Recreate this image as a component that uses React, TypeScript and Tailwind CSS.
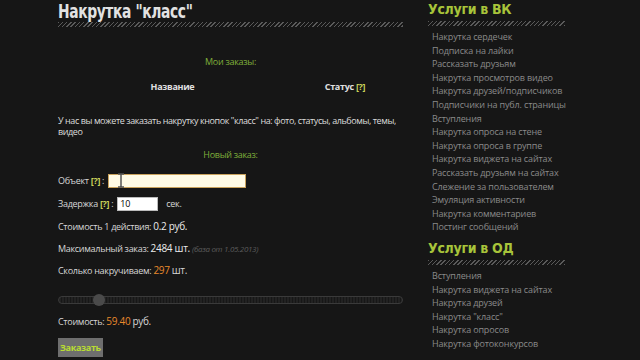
const hatch =
  "bg-[repeating-linear-gradient(135deg,#5a5a5a_0px,#5a5a5a_1px,transparent_1px,transparent_3px)]"

const vkLinks = [
  "Накрутка сердечек",
  "Подписка на лайки",
  "Рассказать друзьям",
  "Накрутка просмотров видео",
  "Накрутка друзей/подписчиков",
  "Подписчики на публ. страницы",
  "Вступления",
  "Накрутка опроса на стене",
  "Накрутка опроса в группе",
  "Накрутка виджета на сайтах",
  "Рассказать друзьям на сайтах",
  "Слежение за пользователем",
  "Эмуляция активности",
  "Накрутка комментариев",
  "Постинг сообщений",
]

const okLinks = [
  "Вступления",
  "Накрутка виджета на сайтах",
  "Накрутка друзей",
  "Накрутка \"класс\"",
  "Накрутка опросов",
  "Накрутка фотоконкурсов",
]

function Help() {
  return <span className="font-bold text-[#c9d35a]">[?]</span>
}

function SideBlock({ title, links, top }: { title: string; links: string[]; top: string }) {
  return (
    <div className={top}>
      <div className="h-[18px] font-['DejaVu_Sans_Condensed','Liberation_Sans_Narrow',sans-serif] text-[14px] font-bold leading-[18px] tracking-[-0.3px] text-[#a8c43a] [font-stretch:condensed]">
        {title}
      </div>
      <div className={`mt-[3px] h-[5px] ${hatch}`} />
      <ul className="mt-[4px] pl-1">
        {links.map((l) => (
          <li key={l} className="h-[13.6px] whitespace-nowrap text-[9px] leading-[13.6px] tracking-[-0.15px] text-[#8a8a8a]">
            {l}
          </li>
        ))}
      </ul>
    </div>
  )
}

export default function App() {
  return (
    <div className="flex h-[360px] w-[640px] overflow-hidden bg-[#161616] pl-[58px] font-['Open_Sans','Noto_Sans',sans-serif] text-[9px] tracking-[-0.3px] text-[#d6d6d6]">
      <main className="w-[345px]">
        <h1 className="h-[22px] origin-left scale-x-[0.77] whitespace-nowrap font-['DejaVu_Sans_Condensed','Liberation_Sans_Narrow',sans-serif] text-[20px] font-bold leading-[22px] tracking-[-0.5px] text-[#e2e2e2] [font-stretch:condensed]">
          Накрутка "класс"
        </h1>
        <div className={`h-[5px] ${hatch}`} />

        <div className="mt-[29px] h-[12px] text-center leading-[12px] text-[#7fae3a]">Мои заказы:</div>

        <div className="mt-[13px] grid h-[12px] grid-cols-[229px_116px] text-center font-bold leading-[12px] text-[#e0e0e0]">
          <div>Название</div>
          <div>
            Статус <Help />
          </div>
        </div>

        <p className="mt-[22px] leading-[11px] tracking-[-0.42px] text-[#dcdcdc]">
          У нас вы можете заказать накрутку кнопок "класс" на: фото, статусы, альбомы, темы, видео
        </p>

        <div className="mt-[12px] h-[12px] text-center leading-[12px] text-[#7fae3a]">Новый заказ:</div>

        <div className="relative mt-[13px] flex h-[14px] items-center gap-1">
          <span>
            Объект <Help /> :
          </span>
          <div className="h-[14px] w-[138px] border border-[#c9a25c] bg-[#fffbe6]" />
          <svg className="absolute left-[59px] top-[-1px]" width="8" height="15" viewBox="0 0 8 15">
            <path d="M1 1h2.5l0.5 1 0.5-1H7M4 2v11M1 14h2.5l0.5-1 0.5 1H7" stroke="#555" strokeWidth="1.5" fill="none" />
          </svg>
        </div>

        <div className="mt-[9px] flex h-[14px] items-center gap-1">
          <span>
            Задержка <Help /> :
          </span>
          <div className="flex h-[14px] w-[41px] items-center border border-[#bbb] bg-white pl-[2px] text-[9px] text-black">10</div>
          <span className="ml-1">сек.</span>
        </div>

        <div className="mt-[9px] h-[12px] leading-[12px]">
          Стоимость 1 действия: <span className="text-[10px] text-[#ececec]">0.2 руб.</span>
        </div>

        <div className="mt-[10px] h-[12px] leading-[12px]">
          Максимальный заказ: <span className="text-[10px] text-[#ececec]">2484 шт.</span>{" "}
          <span className="text-[8px] italic text-[#5c5c5c]">(база от 1.05.2013)</span>
        </div>

        <div className="mt-[10px] h-[12px] leading-[12px]">
          Сколько накручиваем: <span className="text-[10px] text-[#e8892c]">297</span>{" "}
          <span className="text-[10px]">шт.</span>
        </div>

        <div className="relative mt-[18px] flex h-[12px] items-center">
          <div className="h-[8px] w-full rounded-full border border-[#3a3a3a] bg-[repeating-linear-gradient(90deg,#222_0px,#222_2px,#171717_2px,#171717_3px)]" />
          <div className="absolute left-[35px] top-0 h-[12px] w-[12px] rounded-full bg-[#4a4a4a]" />
        </div>

        <div className="mt-[9px] h-[12px] leading-[12px]">
          Стоимость: <span className="text-[10px] text-[#e8892c]">59.40</span>{" "}
          <span className="text-[10px]">руб.</span>
        </div>

        <button className="mt-[11px] h-[19px] bg-[#6e6e6e] px-[2px] text-[9px] font-bold tracking-[-0.3px] text-[#b9dc32]">Заказать</button>
      </main>

      <aside className="ml-[25px] w-[137px]">
        <SideBlock title="Услуги в ВК" links={vkLinks} top="" />
        <SideBlock title="Услуги в ОД" links={okLinks} top="mt-[5px]" />
      </aside>
    </div>
  )
}
